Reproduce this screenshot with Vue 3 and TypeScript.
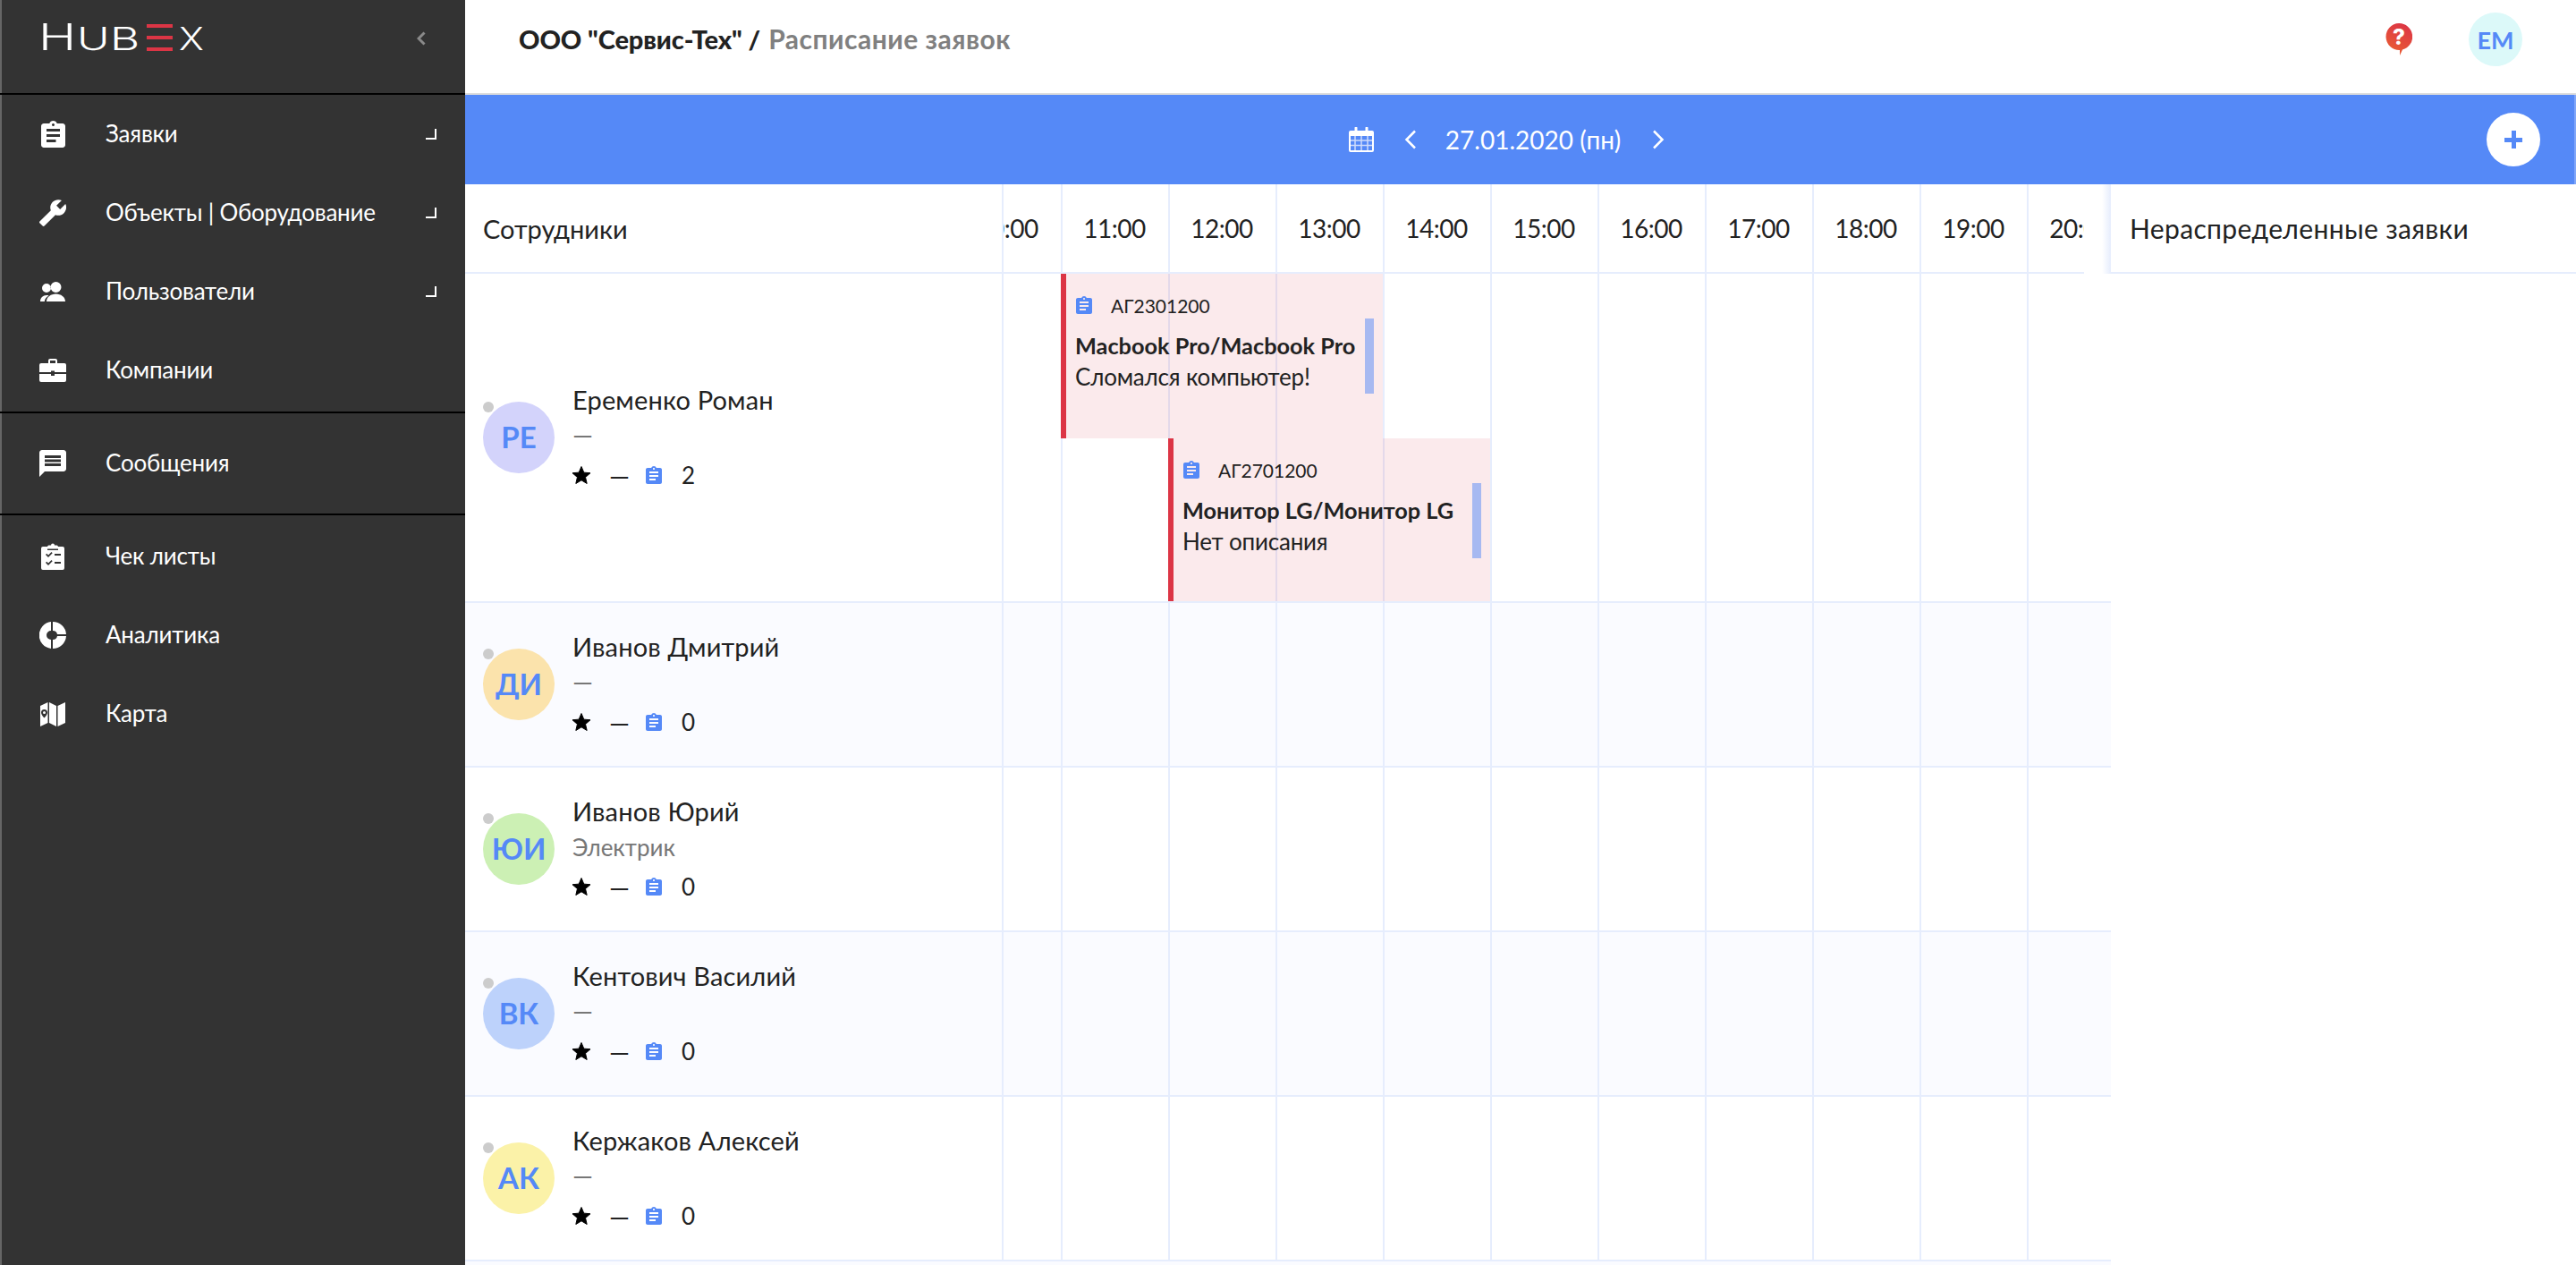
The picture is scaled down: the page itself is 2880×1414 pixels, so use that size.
<script setup lang="ts">
interface NavItem {
  label: string
  box: string
  w: number
  h: number
  d: string
  more?: boolean
}

interface Employee {
  initials: string
  name: string
  role: string
  color: string
  count: number
}

const clipboard =
  'M19 3h-4.18C14.4 1.84 13.3 1 12 1c-1.3 0-2.4.84-2.82 2H5c-1.1 0-2 .9-2 2v14c0 1.1.9 2 2 2h14c1.1 0 2-.9 2-2V5c0-1.1-.9-2-2-2zm-7 0c.55 0 1 .45 1 1s-.45 1-1 1-1-.45-1-1 .45-1 1-1zm2 14H7v-2h7v2zm3-4H7v-2h10v2zm0-4H7V7h10v2z'

const navGroups: NavItem[][] = [
  [
    { label: 'Заявки', box: '3 1 18 20', w: 27, h: 30, d: clipboard, more: true },
    {
      label: 'Объекты | Оборудование',
      box: '1 1 22 22',
      w: 30,
      h: 30,
      d: 'M1.3 19l9.1-9.1c-.9-2.3-.4-5 1.5-6.9 2-2 5-2.4 7.4-1.3L15 6l3 3 4.4-4.3c1.2 2.4.7 5.4-1.3 7.4-1.9 1.9-4.6 2.4-6.9 1.5l-9.1 9.1c-.4.4-1 .4-1.4 0l-2.3-2.3c-.5-.4-.5-1.1-.1-1.4z',
      more: true,
    },
    {
      label: 'Пользователи',
      box: '0 0 28 22',
      w: 28,
      h: 22,
      d: 'M7 2a5 5 0 1 0 0 10a5 5 0 0 0 0-10zM17.5 0a6 6 0 1 0 0 12a6 6 0 0 0 0-12zM7 22c0-5 5-8.5 10.5-8.5S28 17 28 22zM0 22c0-4 3-7 7-7 1 0 1.8.1 2.5.4C6.8 16.8 5 19 4.8 22z',
      more: true,
    },
    {
      label: 'Компании',
      box: '0 0 30 26',
      w: 30,
      h: 26,
      d: 'M2 5h8V2a2 2 0 0 1 2-2h6a2 2 0 0 1 2 2v3h8a2 2 0 0 1 2 2v8H17v-1.5h-4V15H0V7a2 2 0 0 1 2-2zM12 2v3h6V2zM0 17h13v2h4v-2h13v7a2 2 0 0 1-2 2H2a2 2 0 0 1-2-2z',
    },
  ],
  [
    {
      label: 'Сообщения',
      box: '2 2 20 20',
      w: 30,
      h: 30,
      d: 'M20 2H4c-1.1 0-1.99.9-1.99 2L2 22l4-4h14c1.1 0 2-.9 2-2V4c0-1.1-.9-2-2-2zm-2 12H6v-2h12v2zm0-3H6V9h12v2zm0-3H6V6h12v2z',
    },
  ],
  [
    {
      label: 'Чек листы',
      box: '0 0 26 30',
      w: 26,
      h: 30,
      d: 'M2 4h5a2 2 0 0 1 1.5-1.5H11a2 2 0 0 1 4 0h2.5A2 2 0 0 1 19 4h5a2 2 0 0 1 2 2v22a2 2 0 0 1-2 2H2a2 2 0 0 1-2-2V6a2 2 0 0 1 2-2zM7 6.5h12V8H7zM5 13l1.2-1.2 1.8 1.8 3.5-3.5 1.2 1.2-4.7 4.7zM15 12h7v2h-7zM5 22l1.2-1.2 1.8 1.8 3.5-3.5 1.2 1.2-4.7 4.7zM15 21h7v2h-7z',
    },
    {
      label: 'Аналитика',
      box: '0 0 30 30',
      w: 30,
      h: 30,
      d: 'M13 .1A15 15 0 0 0 13 29.9V20a5 5 0 0 1 0-10zM15 0A15 15 0 0 1 30 14H20A5 5 0 0 0 15 10zM30 16A15 15 0 0 1 15 30V20A5 5 0 0 0 20 16z',
    },
    {
      label: 'Карта',
      box: '0 0 28 27',
      w: 28,
      h: 27,
      d: 'M0 4l8.5-4v23L0 27zM4.5 8A3.5 3.5 0 0 0 1 11.5c0 2.5 3.5 6 3.5 6s3.5-3.5 3.5-6A3.5 3.5 0 0 0 4.5 8zM4.5 10a1.5 1.5 0 1 1 0 3a1.5 1.5 0 0 1 0-3zM10 0l8 4v23l-8-4zM19.5 4L28 0v23l-8.5 4z',
    },
  ],
]

const hours = ['10:00', '11:00', '12:00', '13:00', '14:00', '15:00', '16:00', '17:00', '18:00', '19:00', '20:00']

const employees: Employee[] = [
  { initials: 'РЕ', name: 'Еременко Роман', role: '—', color: '#d3d3fb', count: 2 },
  { initials: 'ДИ', name: 'Иванов Дмитрий', role: '—', color: '#fbe3ac', count: 0 },
  { initials: 'ЮИ', name: 'Иванов Юрий', role: 'Электрик', color: '#ccf0b4', count: 0 },
  { initials: 'ВК', name: 'Кентович Василий', role: '—', color: '#bdd2fb', count: 0 },
  { initials: 'АК', name: 'Кержаков Алексей', role: '—', color: '#fbf2a8', count: 0 },
]

const tasks = [
  { code: 'АГ2301200', title: 'Macbook Pro/Macbook Pro', text: 'Сломался компьютер!', left: 64, top: 0, height: 184 },
  { code: 'АГ2701200', title: 'Монитор LG/Монитор LG', text: 'Нет описания', left: 184, top: 184, height: 182 },
]
</script>

<template>
  <div class="app">
    <aside class="sidebar">
      <div class="logo-row">
        <div class="logo">
          <span class="logo-h">H</span>
          <span class="logo-u">U</span>
          <span class="logo-b">B</span>
          <span class="logo-e" aria-label="E"><i></i><i></i><i></i></span>
          <span class="logo-x">X</span>
        </div>
        <svg class="collapse" viewBox="0 0 10 16" width="10" height="16">
          <path d="M8.5 1.5L2 8l6.5 6.5" fill="none" stroke="#8a8a8a" stroke-width="3" />
        </svg>
      </div>
      <nav>
        <ul v-for="(group, g) in navGroups" :key="g" class="nav-group">
          <li v-for="item in group" :key="item.label" class="nav-item">
            <span class="nav-icon">
              <svg :viewBox="item.box" :width="item.w" :height="item.h">
                <path :d="item.d" fill="#fff" fill-rule="evenodd" />
              </svg>
            </span>
            <span class="nav-label">{{ item.label }}</span>
            <span v-if="item.more" class="nav-corner"></span>
          </li>
        </ul>
      </nav>
    </aside>

    <main class="main">
      <header class="topbar">
        <div class="crumbs">
          <b>ООО "Сервис-Тех" /</b>
          <span>Расписание заявок</span>
        </div>
        <div class="top-actions">
          <svg class="help" viewBox="0 0 30 36" width="30" height="36">
            <defs>
              <linearGradient id="helpGrad" x1="0.7" y1="0" x2="0.3" y2="1">
                <stop offset="0" stop-color="#dc3545" />
                <stop offset="1" stop-color="#ea5f33" />
              </linearGradient>
            </defs>
            <path d="M15 0a15 15 0 0 1 4 29.5L16 36v-6A15 15 0 0 1 15 0z" fill="url(#helpGrad)" />
            <text x="15" y="24" text-anchor="middle" class="help-mark">?</text>
          </svg>
          <div class="me">ЕМ</div>
        </div>
      </header>

      <div class="datebar">
        <div class="date-nav">
          <svg viewBox="0 0 28 28" width="28" height="28">
            <path d="M2 4h24a2 2 0 0 1 2 2v20a2 2 0 0 1-2 2H2a2 2 0 0 1-2-2V6a2 2 0 0 1 2-2zM2 10v16h24V10z" fill="#fff" fill-rule="evenodd" />
            <path d="M7 10v16M14 10v16M21 10v16M2 15h24M2 20.5h24" stroke="#cfdcfc" stroke-width="1.5" />
            <path d="M8 1v5M20 1v5" stroke="#fff" stroke-width="3" stroke-linecap="round" />
          </svg>
          <svg class="chev-left" viewBox="0 0 14 22" width="14" height="22">
            <path d="M12 1.5L2.5 11l9.5 9.5" fill="none" stroke="#fff" stroke-width="2.5" />
          </svg>
          <span class="date">27.01.2020 (пн)</span>
          <svg class="chev-right" viewBox="0 0 14 22" width="14" height="22">
            <path d="M2 1.5L11.5 11 2 20.5" fill="none" stroke="#fff" stroke-width="2.5" />
          </svg>
        </div>
        <button class="add" type="button" aria-label="Добавить"><i></i></button>
      </div>

      <div class="board">
        <section class="schedule">
          <div class="sched-head">
            <div class="staff-title">Сотрудники</div>
            <div class="hours-clip">
              <div class="track">
                <div v-for="h in hours" :key="h" class="hour">{{ h }}</div>
              </div>
            </div>
          </div>

          <div
            v-for="(person, i) in employees"
            :key="person.name"
            class="row"
            :class="{ 'row--big': i === 0 }"
          >
            <div class="person">
              <div class="avatar" :style="{ background: person.color }">
                <span class="dot"></span>
                <span class="initials">{{ person.initials }}</span>
              </div>
              <div class="info">
                <div class="name">{{ person.name }}</div>
                <div class="role" :class="{ 'role--empty': person.role === '—' }">{{ person.role }}</div>
                <div class="stats">
                  <svg viewBox="2 2 20 19" width="20" height="20">
                    <path d="M12 17.27L18.18 21l-1.64-7.03L22 9.24l-7.19-.61L12 2 9.19 8.63 2 9.24l5.46 4.73L5.82 21z" fill="#000" stroke="#000" stroke-linejoin="round" />
                  </svg>
                  <span class="stat-dash">—</span>
                  <svg viewBox="3 1 18 20" width="18" height="20">
                    <path :d="clipboard" fill="#5589f7" />
                  </svg>
                  <span class="stat-count">{{ person.count }}</span>
                </div>
              </div>
            </div>
            <div class="cells">
              <div class="track">
                <div v-for="h in hours" :key="h" class="cell"></div>
              </div>
              <template v-if="i === 0">
                <article
                  v-for="task in tasks"
                  :key="task.code"
                  class="task"
                  :style="{ left: task.left + 'px', top: task.top + 'px', height: task.height + 'px' }"
                >
                  <div class="task-code">
                    <svg viewBox="3 1 18 20" width="18" height="20">
                      <path :d="clipboard" fill="#5589f7" />
                    </svg>
                    <span>{{ task.code }}</span>
                  </div>
                  <div class="task-title">{{ task.title }}</div>
                  <div class="task-text">{{ task.text }}</div>
                  <span class="task-grip"></span>
                </article>
              </template>
            </div>
          </div>
          <div class="row row--tail"></div>
        </section>

        <section class="unassigned">
          <div class="unassigned-head">Нераспределенные заявки</div>
        </section>
      </div>
    </main>
  </div>
</template>

<style>
html,
body {
  margin: 0;
  overflow: hidden;
}
</style>

<style scoped>
.app {
  color: #222;
  display: flex;
  font-family: "Lato", "Noto Sans", sans-serif;
  height: 1414px;
  overflow: hidden;
  width: 2880px;
}

.sidebar {
  background: #333;
  border-left: 2px solid #666;
  box-sizing: border-box;
  color: #fff;
  flex: 0 0 520px;
}

.logo-row {
  align-items: flex-start;
  border-bottom: 2px solid #000;
  box-sizing: border-box;
  display: flex;
  height: 106px;
  justify-content: space-between;
  margin-left: -2px;
  padding: 27px 44px 0 47px;
}

.logo {
  font-family: "Inter", sans-serif;
  font-weight: 350;
  height: 30px;
  line-height: 1;
  position: relative;
  width: 181px;
}

.logo span {
  display: block;
  position: absolute;
  transform-origin: left bottom;
}

.logo-h {
  bottom: -5px;
  font-size: 41px;
  left: -4px;
  transform: scaleX(1.39);
}

.logo-u,
.logo-b,
.logo-x {
  bottom: -4px;
  font-size: 36px;
}

.logo-u {
  left: 39px;
  transform: scaleX(1.38);
}

.logo-b {
  left: 76px;
  transform: scaleX(1.42);
}

.logo-x {
  left: 153px;
  transform: scaleX(1.17);
}

.logo .logo-e {
  display: flex;
  flex-direction: column;
  height: 30px;
  justify-content: space-between;
  left: 117px;
  width: 29px;
}

.logo-e i {
  background: #dc3545;
  display: block;
  height: 4px;
}

.collapse {
  margin-top: 8px;
}

.nav-group {
  border-bottom: 2px solid #000;
  list-style: none;
  margin: 0 0 0 -2px;
  padding: 0 0 2px;
}

.nav-group:nth-child(2) {
  padding: 12px 0;
}

.nav-group:nth-child(3) {
  border-bottom: 0;
  padding: 2px 0 0;
}

.nav-item {
  align-items: center;
  display: flex;
  height: 88px;
  position: relative;
}

.nav-icon {
  display: flex;
  flex: 0 0 118px;
  justify-content: center;
}

.nav-label {
  font-size: 26px;
  letter-spacing: -0.2px;
  padding-bottom: 2px;
}

.nav-corner {
  border-bottom: 2px solid #fff;
  border-right: 2px solid #fff;
  box-sizing: border-box;
  height: 12px;
  position: absolute;
  right: 32px;
  top: 38px;
  width: 12px;
}

.main {
  display: flex;
  flex: 1;
  flex-direction: column;
  min-width: 0;
}

.topbar {
  align-items: center;
  border-bottom: 2px solid #ddd;
  box-sizing: border-box;
  display: flex;
  flex: 0 0 106px;
  justify-content: space-between;
  padding: 0 60px;
}

.crumbs {
  align-items: baseline;
  display: flex;
  font-size: 29px;
  font-weight: 700;
  gap: 9px;
  margin-top: -18px;
}

.crumbs b {
  letter-spacing: -0.1px;
}

.crumbs span {
  color: #808080;
  font-size: 30px;
  letter-spacing: 0.5px;
}

.top-actions {
  align-items: center;
  display: flex;
  gap: 63px;
  margin-top: -16px;
}

.help-mark {
  fill: #fff;
  font-family: "Inter", sans-serif;
  font-size: 24px;
  font-weight: 800;
}

.me {
  align-items: center;
  background: #dcf9f9;
  border-radius: 50%;
  color: #5589f7;
  display: flex;
  font-size: 27px;
  font-weight: 700;
  height: 60px;
  justify-content: center;
  width: 60px;
}

.datebar {
  align-items: center;
  background: #5589f7;
  border-right: 2px solid #80a6f9;
  box-sizing: border-box;
  color: #fff;
  display: flex;
  flex: 0 0 100px;
  justify-content: center;
  position: relative;
}

.date-nav {
  align-items: center;
  display: flex;
  margin-right: 29px;
}

.chev-left {
  margin-left: 34px;
}

.date {
  font-size: 28px;
  margin: 0 35px 0 32px;
}

.add {
  background: #fff;
  border: 0;
  border-radius: 50%;
  height: 60px;
  padding: 0;
  position: absolute;
  right: 38px;
  top: 20px;
  width: 60px;
}

.add i,
.add i::after {
  background: #5589f7;
  display: block;
  position: absolute;
}

.add i {
  height: 5px;
  left: 20px;
  top: 28px;
  width: 20px;
}

.add i::after {
  content: "";
  height: 20px;
  left: 8px;
  top: -8px;
  width: 5px;
}

.board {
  display: flex;
  flex: 1;
  min-height: 0;
}

.schedule {
  flex: 0 0 1840px;
  overflow: hidden;
}

.sched-head {
  display: flex;
  height: 100px;
}

.staff-title {
  align-items: center;
  border-bottom: 2px solid #e6edfd;
  border-right: 2px solid #e6edfd;
  box-sizing: border-box;
  display: flex;
  flex: 0 0 602px;
  font-size: 29px;
  padding-left: 20px;
}

.hours-clip {
  border-bottom: 2px solid #e6edfd;
  box-sizing: border-box;
  flex: 0 0 1208px;
  overflow: hidden;
}

.track {
  display: flex;
  height: 100%;
  margin-left: -54px;
}

.hour {
  align-items: center;
  border-right: 2px solid #e6edfd;
  box-sizing: border-box;
  display: flex;
  flex: 0 0 120px;
  font-size: 28px;
  justify-content: center;
  letter-spacing: -0.5px;
  padding-right: 2px;
}

.cell {
  border-right: 2px solid #e6edfd;
  box-sizing: border-box;
  flex: 0 0 120px;
}

.row {
  border-bottom: 2px solid #e6edfd;
  box-sizing: border-box;
  display: flex;
  height: 184px;
}

.row:nth-child(odd) {
  background: #fafbff;
}

.row--big {
  height: 368px;
}

.row--tail {
  border-bottom: 0;
}

.person {
  align-items: center;
  border-right: 2px solid #e6edfd;
  box-sizing: border-box;
  display: flex;
  flex: 0 0 602px;
  gap: 20px;
  padding-left: 20px;
}

.avatar {
  align-items: center;
  border-radius: 50%;
  color: #5589f7;
  display: flex;
  flex: 0 0 80px;
  font-size: 33px;
  font-weight: 700;
  height: 80px;
  justify-content: center;
  position: relative;
}

.initials {
  margin-top: -3px;
}

.dot {
  background: #ccc;
  border-radius: 50%;
  height: 12px;
  left: 0;
  position: absolute;
  top: 0;
  width: 12px;
}

.info {
  display: flex;
  flex-direction: column;
}

.name {
  font-size: 29px;
  letter-spacing: 0.15px;
  line-height: 42px;
}

.role {
  color: #777;
  font-size: 26px;
  height: 42px;
  line-height: 38px;
}

.role--empty {
  font-size: 29px;
  line-height: 36px;
}

.stats {
  align-items: center;
  display: flex;
  font-size: 26px;
  height: 42px;
}

.stat-dash {
  color: #222;
  font-size: 29px;
  margin: 0 18px 0 21px;
}

.stat-count {
  margin-left: 22px;
}

.cells {
  flex: 1;
  min-width: 0;
  overflow: hidden;
  position: relative;
}

.task {
  background: rgba(220, 53, 69, 0.1);
  border-left: 6px solid #dc3545;
  box-sizing: border-box;
  padding: 23px 0 0 11px;
  position: absolute;
  width: 360px;
}

.task-code {
  align-items: center;
  display: flex;
  font-size: 21px;
  gap: 21px;
  height: 24px;
}

.task-title {
  font-size: 25.3px;
  font-weight: 700;
  line-height: 36px;
  margin: 15px 0 0 -1px;
  white-space: nowrap;
}

.task-text {
  font-size: 26px;
  letter-spacing: -0.2px;
  line-height: 34px;
  margin-left: -1px;
}

.task-grip {
  background: #a7b9f1;
  height: 84px;
  position: absolute;
  right: 10px;
  top: 50px;
  width: 10px;
}

.unassigned {
  flex: 1;
  min-width: 0;
}

.unassigned-head {
  align-items: center;
  border-bottom: 2px solid #e6edfd;
  box-sizing: border-box;
  display: flex;
  font-size: 30px;
  height: 100px;
  letter-spacing: 0.35px;
  padding-left: 21px;
  position: relative;
}

.unassigned-head::before {
  background: linear-gradient(to right, rgba(230, 237, 253, 0), #e6edfd);
  content: "";
  height: 100px;
  left: -10px;
  position: absolute;
  top: 0;
  width: 10px;
}
</style>
